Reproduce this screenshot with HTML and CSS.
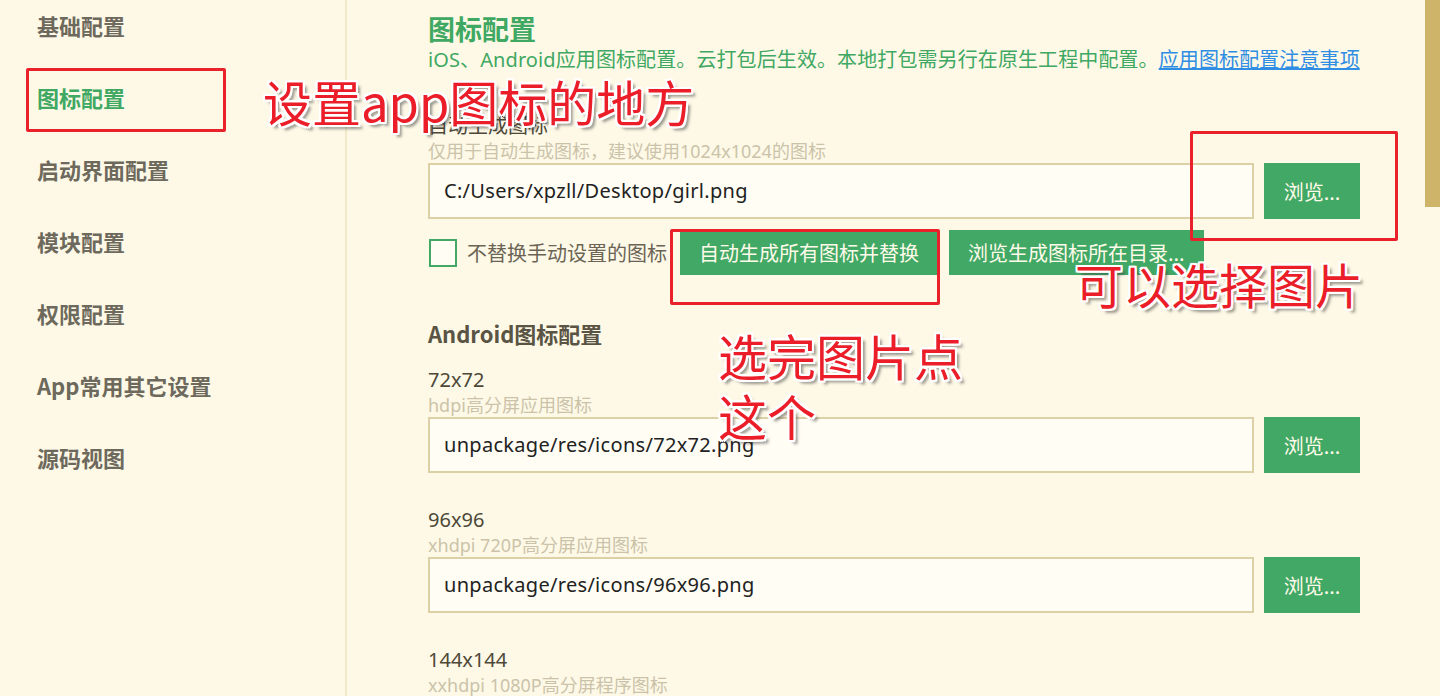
FILE: index.html
```html
<!DOCTYPE html>
<html lang="zh-CN">
<head>
<meta charset="utf-8">
<title>图标配置</title>
<link rel="stylesheet" href="styles.css">
</head>
<body>
<div class="app">
  <nav class="sidebar">
    <div class="nav-item">基础配置</div>
    <div class="nav-item active">图标配置</div>
    <div class="nav-item">启动界面配置</div>
    <div class="nav-item">模块配置</div>
    <div class="nav-item">权限配置</div>
    <div class="nav-item">App常用其它设置</div>
    <div class="nav-item">源码视图</div>
  </nav>
  <main class="main">
    <h1 class="title">图标配置</h1>
    <p class="desc">iOS、Android应用图标配置。云打包后生效。本地打包需另行在原生工程中配置。<a class="link" href="#">应用图标配置注意事项</a></p>

    <div class="field first">
      <div class="label">自动生成图标</div>
      <div class="hint">仅用于自动生成图标，建议使用1024x1024的图标</div>
      <div class="input-row">
        <div class="input">C:/Users/xpzll/Desktop/girl.png</div>
        <button class="btn browse">浏览...</button>
      </div>
    </div>

    <div class="action-row">
      <span class="checkbox"></span>
      <span class="check-label">不替换手动设置的图标</span>
      <button class="btn action">自动生成所有图标并替换</button>
      <button class="btn action">浏览生成图标所在目录...</button>
    </div>

    <h2 class="section">Android图标配置</h2>

    <div class="field">
      <div class="label">72x72</div>
      <div class="hint">hdpi高分屏应用图标</div>
      <div class="input-row">
        <div class="input">unpackage/res/icons/72x72.png</div>
        <button class="btn browse">浏览...</button>
      </div>
    </div>

    <div class="field">
      <div class="label">96x96</div>
      <div class="hint">xhdpi 720P高分屏应用图标</div>
      <div class="input-row">
        <div class="input">unpackage/res/icons/96x96.png</div>
        <button class="btn browse">浏览...</button>
      </div>
    </div>

    <div class="field">
      <div class="label">144x144</div>
      <div class="hint">xxhdpi 1080P高分屏程序图标</div>
      <div class="input-row">
        <div class="input">unpackage/res/icons/144x144.png</div>
        <button class="btn browse">浏览...</button>
      </div>
    </div>
  </main>
  <div class="scrollbar"><div class="thumb"></div></div>

  <div class="mark box-nav"></div>
  <div class="mark box-gen"></div>
  <div class="mark box-browse"></div>
  <div class="note note-1">设置app图标的地方</div>
  <div class="note note-2">可以选择图片</div>
  <div class="note note-3">选完图片点<br>这个</div>
</div>
</body>
</html>
```

FILE: styles.css
```css
* { box-sizing: border-box; }
html, body {
  margin: 0;
  padding: 0;
  height: 696px;
  overflow: hidden;
  background: #fef9e7;
  font-family: "Noto Sans", "Noto Sans CJK SC", sans-serif;
}
.app {
  position: relative;
  display: flex;
  height: 696px;
  overflow: hidden;
}
.sidebar {
  width: 347px;
  flex: none;
  border-right: 2px solid #f2e9cb;
  padding: 13px 0 0 37px;
}
.nav-item {
  font-size: 22px;
  font-weight: bold;
  line-height: 24px;
  height: 24px;
  margin-bottom: 48px;
  color: #6d695c;
  font-family: "Noto Sans CJK SC", "Noto Sans", sans-serif;
  white-space: nowrap;
}
.nav-item.active { color: #3fa862; }

.main {
  flex: 1;
  padding: 13px 65px 0 81px;
  min-width: 0;
}
.title {
  margin: 0;
  font-size: 27px;
  line-height: 32px;
  font-weight: bold;
  color: #3fa862;
  font-family: "Noto Sans CJK SC", sans-serif;
}
.desc {
  margin: 1px 0 0;
  font-size: 20px;
  line-height: 28px;
  color: #3fa862;
  white-space: nowrap;
  letter-spacing: 0.1px;
}
.link {
  color: #2f8de4;
  text-decoration: underline;
}
.field { margin-bottom: 34px; }
.field.first { margin-top: 39px; margin-bottom: 0; }
.label {
  font-size: 20px;
  line-height: 26px;
  color: #4d4838;
}
.hint {
  font-size: 18px;
  line-height: 24px;
  color: #cbc3a9;
  white-space: nowrap;
}
.input-row {
  display: flex;
  gap: 10px;
  height: 56px;
}
.input {
  flex: 1;
  height: 56px;
  border: 2px solid #dcd0a6;
  background: #fffdf4;
  font-size: 20px;
  letter-spacing: 0.3px;
  line-height: 52px;
  padding-left: 14px;
  color: #222;
}
.btn {
  border: none;
  background: #42a865;
  color: #fffbea;
  font-family: "Noto Sans CJK SC", "Noto Sans", sans-serif;
  font-size: 20px;
  padding: 0;
  cursor: pointer;
}
.browse {
  width: 96px;
  flex: none;
  height: 56px;
}
.action-row {
  display: flex;
  align-items: center;
  height: 45px;
  margin-top: 11px;
}
.checkbox {
  width: 28px;
  height: 28px;
  border: 2px solid #42a865;
  background: #fffdf4;
  margin-left: 1px;
  flex: none;
}
.check-label {
  font-size: 20px;
  color: #6b6455;
  margin-left: 10px;
  margin-right: 13px;
  white-space: nowrap;
  font-family: "Noto Sans CJK SC", sans-serif;
}
.action {
  height: 45px;
  padding: 0 19px;
  white-space: nowrap;
  margin-right: 11px;
}
.section {
  margin: 44px 0 20px;
  font-size: 22px;
  line-height: 28px;
  font-weight: bold;
  color: #5a5444;
  font-family: "Noto Sans CJK SC", sans-serif;
}
.scrollbar {
  width: 15px;
  flex: none;
}
.thumb {
  height: 207px;
  background: #ceb469;
}

/* annotations drawn over the screenshot */
.mark {
  position: absolute;
  border: 3px solid #e8212b;
  border-radius: 2px;
}
.box-nav { left: 26px; top: 68px; width: 200px; height: 64px; }
.box-gen { left: 670px; top: 229px; width: 270px; height: 76px; }
.box-browse { left: 1190px; top: 131px; width: 208px; height: 110px; }
.note {
  position: absolute;
  color: #ea1d28;
  font-family: "Noto Sans CJK SC", sans-serif;
  white-space: nowrap;
  text-shadow:
    -2px -2px 0 #fff, 0 -2px 0 #fff, 2px -2px 0 #fff,
    -2px 0 0 #fff, 2px 0 0 #fff,
    -2px 2px 0 #fff, 0 2px 0 #fff, 2px 2px 0 #fff,
    4px 4px 3px rgba(60, 60, 60, 0.55);
}
.note-1 { left: 263px; top: 75px; font-size: 49px; line-height: 52px; }
.note-2 { left: 1075px; top: 258px; font-size: 48px; line-height: 50px; }
.note-3 { left: 718px; top: 325px; font-size: 49px; line-height: 60px; }
```
